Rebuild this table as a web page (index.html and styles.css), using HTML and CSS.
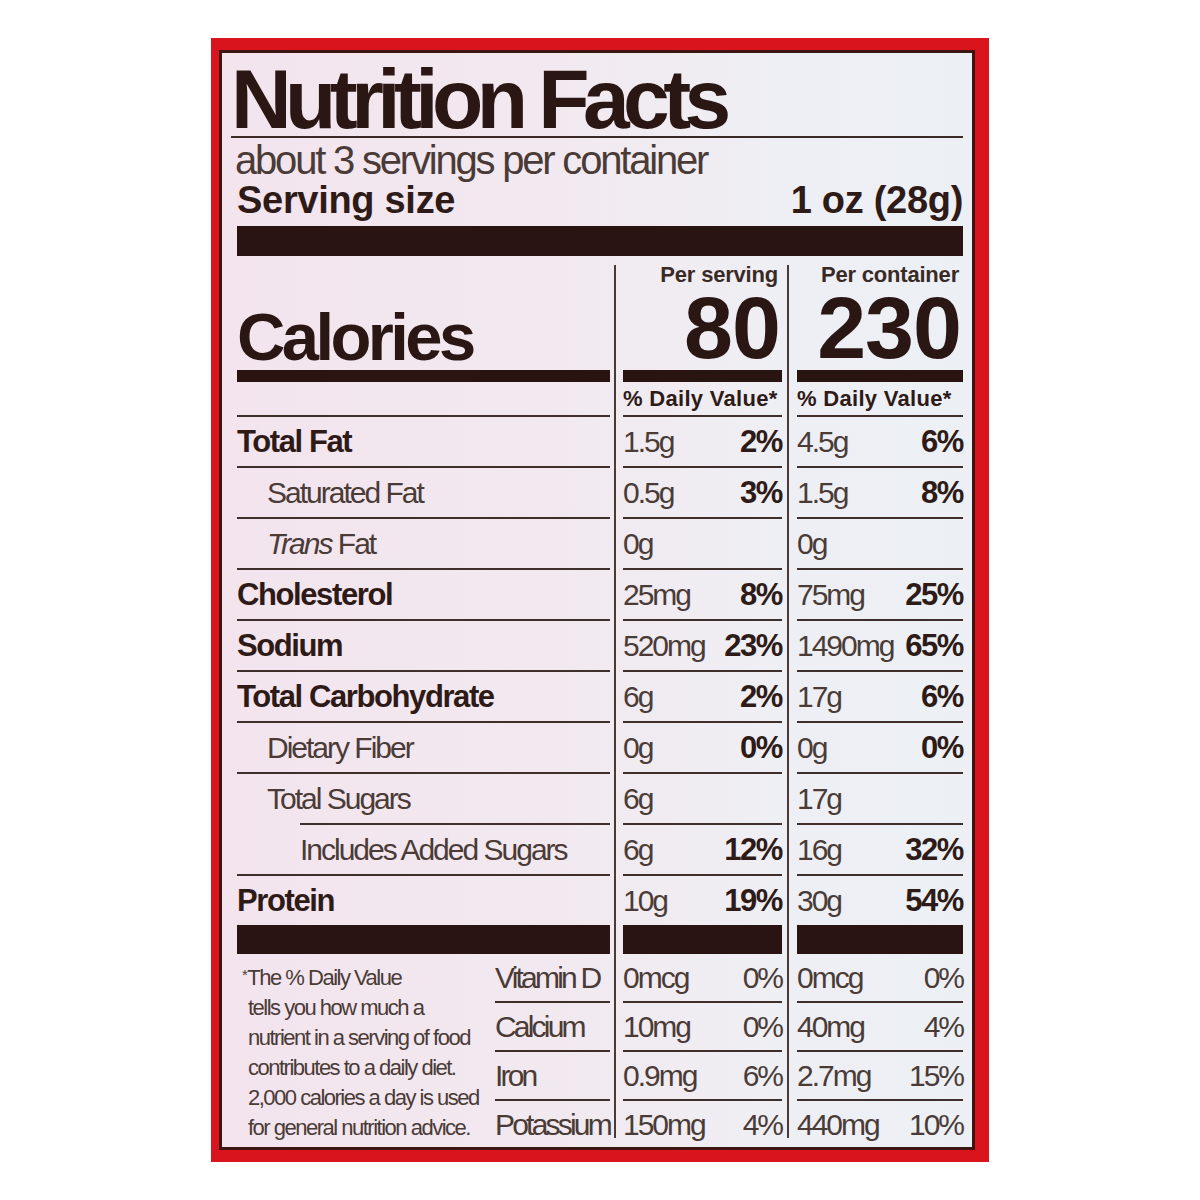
FILE: index.html
```html
<!DOCTYPE html>
<html lang="en">
<head>
<meta charset="utf-8">
<title>Nutrition Facts</title>
<link rel="stylesheet" href="styles.css">
</head>
<body>
<div class="page">
  <div class="label">
    <div class="inner">
      <h1 class="title">Nutrition Facts</h1>
      <div class="servings">about 3 servings per container</div>
      <div class="size"><span>Serving size</span><span>1 oz (28g)</span></div>
      <div class="bar-xl"></div>

      <div class="table">
        <div class="col col-name">
          <div class="head"><span class="cal">Calories</span></div>
          <div class="dv"></div>
          <div class="row b">Total Fat</div>
          <div class="row ind">Saturated Fat</div>
          <div class="row ind"><i>Trans</i> Fat</div>
          <div class="row b">Cholesterol</div>
          <div class="row b">Sodium</div>
          <div class="row b">Total Carbohydrate</div>
          <div class="row ind">Dietary Fiber</div>
          <div class="row sugars">Total Sugars</div>
          <div class="row ind2">Includes Added Sugars</div>
          <div class="row last b">Protein</div>
          <div class="foot">
            <p class="note"><span class="ast">*</span>The % Daily Value<br>tells you how much a<br>nutrient in a serving of food<br>contributes to a daily diet.<br>2,000 calories a day is used<br>for general nutrition advice.</p>
            <div class="vits">
              <div class="vrow">Vitamin D</div>
              <div class="vrow">Calcium</div>
              <div class="vrow">Iron</div>
              <div class="vrow vlast">Potassium</div>
            </div>
          </div>
        </div>

        <div class="col col-val col-a">
          <div class="head"><div class="per">Per serving</div><div class="big">80</div></div>
          <div class="dv">% Daily Value*</div>
          <div class="row"><span>1.5g</span><b>2%</b></div>
          <div class="row"><span>0.5g</span><b>3%</b></div>
          <div class="row"><span>0g</span></div>
          <div class="row"><span>25mg</span><b>8%</b></div>
          <div class="row"><span>520mg</span><b>23%</b></div>
          <div class="row"><span>6g</span><b>2%</b></div>
          <div class="row"><span>0g</span><b>0%</b></div>
          <div class="row"><span>6g</span></div>
          <div class="row"><span>6g</span><b>12%</b></div>
          <div class="row last"><span>10g</span><b>19%</b></div>
          <div class="vits">
            <div class="vrow"><span>0mcg</span><span>0%</span></div>
            <div class="vrow"><span>10mg</span><span>0%</span></div>
            <div class="vrow"><span>0.9mg</span><span>6%</span></div>
            <div class="vrow vlast"><span>150mg</span><span>4%</span></div>
          </div>
        </div>

        <div class="col col-val col-b">
          <div class="head"><div class="per">Per container</div><div class="big">230</div></div>
          <div class="dv">% Daily Value*</div>
          <div class="row"><span>4.5g</span><b>6%</b></div>
          <div class="row"><span>1.5g</span><b>8%</b></div>
          <div class="row"><span>0g</span></div>
          <div class="row"><span>75mg</span><b>25%</b></div>
          <div class="row"><span>1490mg</span><b>65%</b></div>
          <div class="row"><span>17g</span><b>6%</b></div>
          <div class="row"><span>0g</span><b>0%</b></div>
          <div class="row"><span>17g</span></div>
          <div class="row"><span>16g</span><b>32%</b></div>
          <div class="row last"><span>30g</span><b>54%</b></div>
          <div class="vits">
            <div class="vrow"><span>0mcg</span><span>0%</span></div>
            <div class="vrow"><span>40mg</span><span>4%</span></div>
            <div class="vrow"><span>2.7mg</span><span>15%</span></div>
            <div class="vrow vlast"><span>440mg</span><span>10%</span></div>
          </div>
        </div>
      </div>
    </div>
  </div>
</div>
</body>
</html>
```

FILE: styles.css
```css
html, body {
  margin: 0;
  padding: 0;
  background: #ffffff;
}

.page {
  padding: 38px 0 0 211px;
}

.label {
  box-sizing: border-box;
  width: 778px;
  height: 1124px;
  border-style: solid;
  border-color: #d9141d;
  border-width: 12px 14px 12px 8px;
  background: #d9141d;
}

.inner {
  box-sizing: border-box;
  height: 100%;
  border: 3px solid #3d1512;
  padding: 9px 9px 0 15px;
  background: linear-gradient(90deg, #f3e4ee 0%, #f2e9f0 45%, #eeeff4 75%, #ecf0f5 100%);
  color: #4a3b37;
  font-family: "Liberation Sans", Arial, sans-serif;
}

.title {
  margin: 0 0 0 -6px;
  font-weight: 700;
  font-size: 84px;
  line-height: 74px;
  letter-spacing: -6.6px;
  color: #2a1713;
  border-bottom: 2px solid #3a2925;
}

.servings {
  margin: 3px 0 0 -2px;
  font-size: 40px;
  line-height: 38px;
  letter-spacing: -2.2px;
  color: #4a3b37;
}

.size {
  margin-top: 2px;
  display: flex;
  justify-content: space-between;
  font-weight: 700;
  font-size: 38px;
  line-height: 38px;
  letter-spacing: -0.3px;
  color: #2e1b17;
}

.bar-xl {
  margin-top: 7px;
  height: 30px;
  background: #2a1411;
}

.table {
  margin-top: 9px;
  display: flex;
  align-items: stretch;
}

.col {
  display: flex;
  flex-direction: column;
}

.col-name {
  width: 373px;
  margin-right: 4px;
}

.col-val {
  border-left: 2px solid #4a3a36;
  height: 873px;
}

.col-a {
  width: 159px;
  padding: 0 5px 0 7px;
}

.col-b {
  width: 166px;
  padding: 0 0 0 8px;
}

.head {
  height: 105px;
  border-bottom: 12px solid #2a1411;
  display: flex;
  flex-direction: column;
  justify-content: flex-end;
  align-items: flex-end;
}

.col-name .head {
  align-items: flex-start;
}

.cal {
  font-weight: 700;
  font-size: 67px;
  line-height: 67px;
  letter-spacing: -3.6px;
  color: #2a1713;
}

.per {
  font-weight: 700;
  font-size: 22px;
  line-height: 20px;
  letter-spacing: -0.2px;
  padding-right: 4px;
  color: #3a2a26;
  white-space: nowrap;
}

.big {
  font-weight: 700;
  font-size: 88px;
  line-height: 85px;
  letter-spacing: -1px;
  padding-right: 2px;
  color: #2a1713;
}

.dv {
  height: 33px;
  border-bottom: 2px solid #3f2f2b;
  font-weight: 700;
  font-size: 22px;
  line-height: 33px;
  letter-spacing: 0.3px;
  color: #2e1b17;
  white-space: nowrap;
}

.row {
  height: 49px;
  border-bottom: 2px solid #3f2f2b;
  font-size: 30px;
  line-height: 49px;
  letter-spacing: -2px;
  white-space: nowrap;
  display: flex;
  justify-content: space-between;
}

.col-name .row {
  display: block;
}

.row b,
.row.b {
  font-weight: 700;
  font-size: 31px;
  letter-spacing: -1.4px;
  color: #2e1b17;
}

.row.ind {
  padding-left: 30px;
}

.row.sugars {
  margin-left: 63px;
  text-indent: -33px;
}

.row.ind2 {
  padding-left: 63px;
}

.row.last {
  border-bottom: 29px solid #2a1411;
}

.foot {
  display: flex;
  flex: 1;
}

.note {
  margin: 0;
  width: 247px;
  padding: 6px 0 0 11px;
  text-indent: -6px;
  font-size: 22px;
  line-height: 30px;
  letter-spacing: -1.5px;
  white-space: nowrap;
  color: #4a3b37;
}

.ast {
  font-size: 15px;
  vertical-align: 5px;
  margin-right: 1px;
}

.vits {
  display: flex;
  flex-direction: column;
}

.col-name .vits {
  width: 115px;
}

.vrow {
  height: 47px;
  border-bottom: 2px solid #3f2f2b;
  font-size: 30px;
  line-height: 47px;
  letter-spacing: -2px;
  white-space: nowrap;
  display: flex;
  justify-content: space-between;
}

.col-name .vrow {
  letter-spacing: -2.8px;
}

.vrow.vlast {
  border-bottom: none;
  height: 37px;
}
```
